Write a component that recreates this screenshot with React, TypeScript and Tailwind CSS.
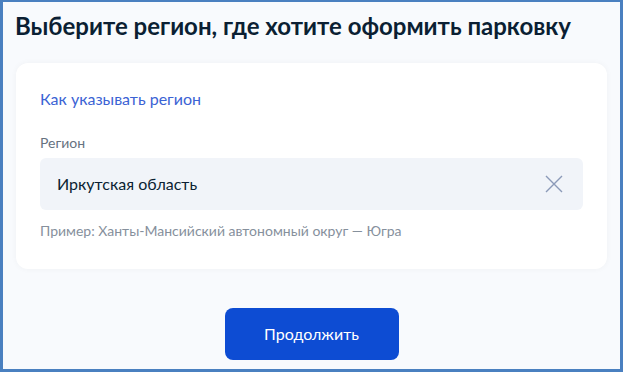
import React from "react";

export default function App() {
    return (
        <div className="w-[623px] h-[372px] bg-[#f8fafd] border-[#4a80c0] border-t-2 border-l-[3px] border-r-[3px] border-b-[3px] font-['Lato','Noto_Sans',sans-serif] overflow-hidden">
            <h1 className="pl-[12px] pt-[9px] text-[24px] leading-[30px] font-bold text-[#0b1f33]">
                Выберите регион, где хотите оформить парковку
            </h1>
            <div className="mt-[22px] mx-[13px] bg-white rounded-[12px] shadow-[0_0_6px_rgba(0,0,0,0.04)] px-[24px] pt-[24px] pb-[28px]">
                <a className="block text-[16px] leading-[24px] text-[#3b63d4]" href="#">
                    Как указывать регион
                </a>
                <div className="mt-[22px] text-[14px] leading-[20px] text-[#66727f]">Регион</div>
                <div className="mt-[5px] h-[52px] bg-[#f1f4f9] rounded-[6px] flex items-center pl-[17px] pr-[20px]">
                    <span className="flex-1 text-[16px] text-[#0b1f33]">Иркутская область</span>
                    <svg width="18" height="18" viewBox="0 0 18 18" fill="none">
                        <path d="M1 1L17 17M17 1L1 17" stroke="#8b9ab8" strokeWidth="1.4" />
                    </svg>
                </div>
                <div className="mt-[11px] text-[14px] leading-[20px] text-[#86909c]">
                    Пример: Ханты-Мансийский автономный округ — Югра
                </div>
            </div>
            <div className="flex justify-center mt-[39px]">
                <button className="w-[174px] h-[52px] rounded-[8px] bg-[#0d4cd3] text-white text-[16px]">
                    Продолжить
                </button>
            </div>
        </div>
    );
}
